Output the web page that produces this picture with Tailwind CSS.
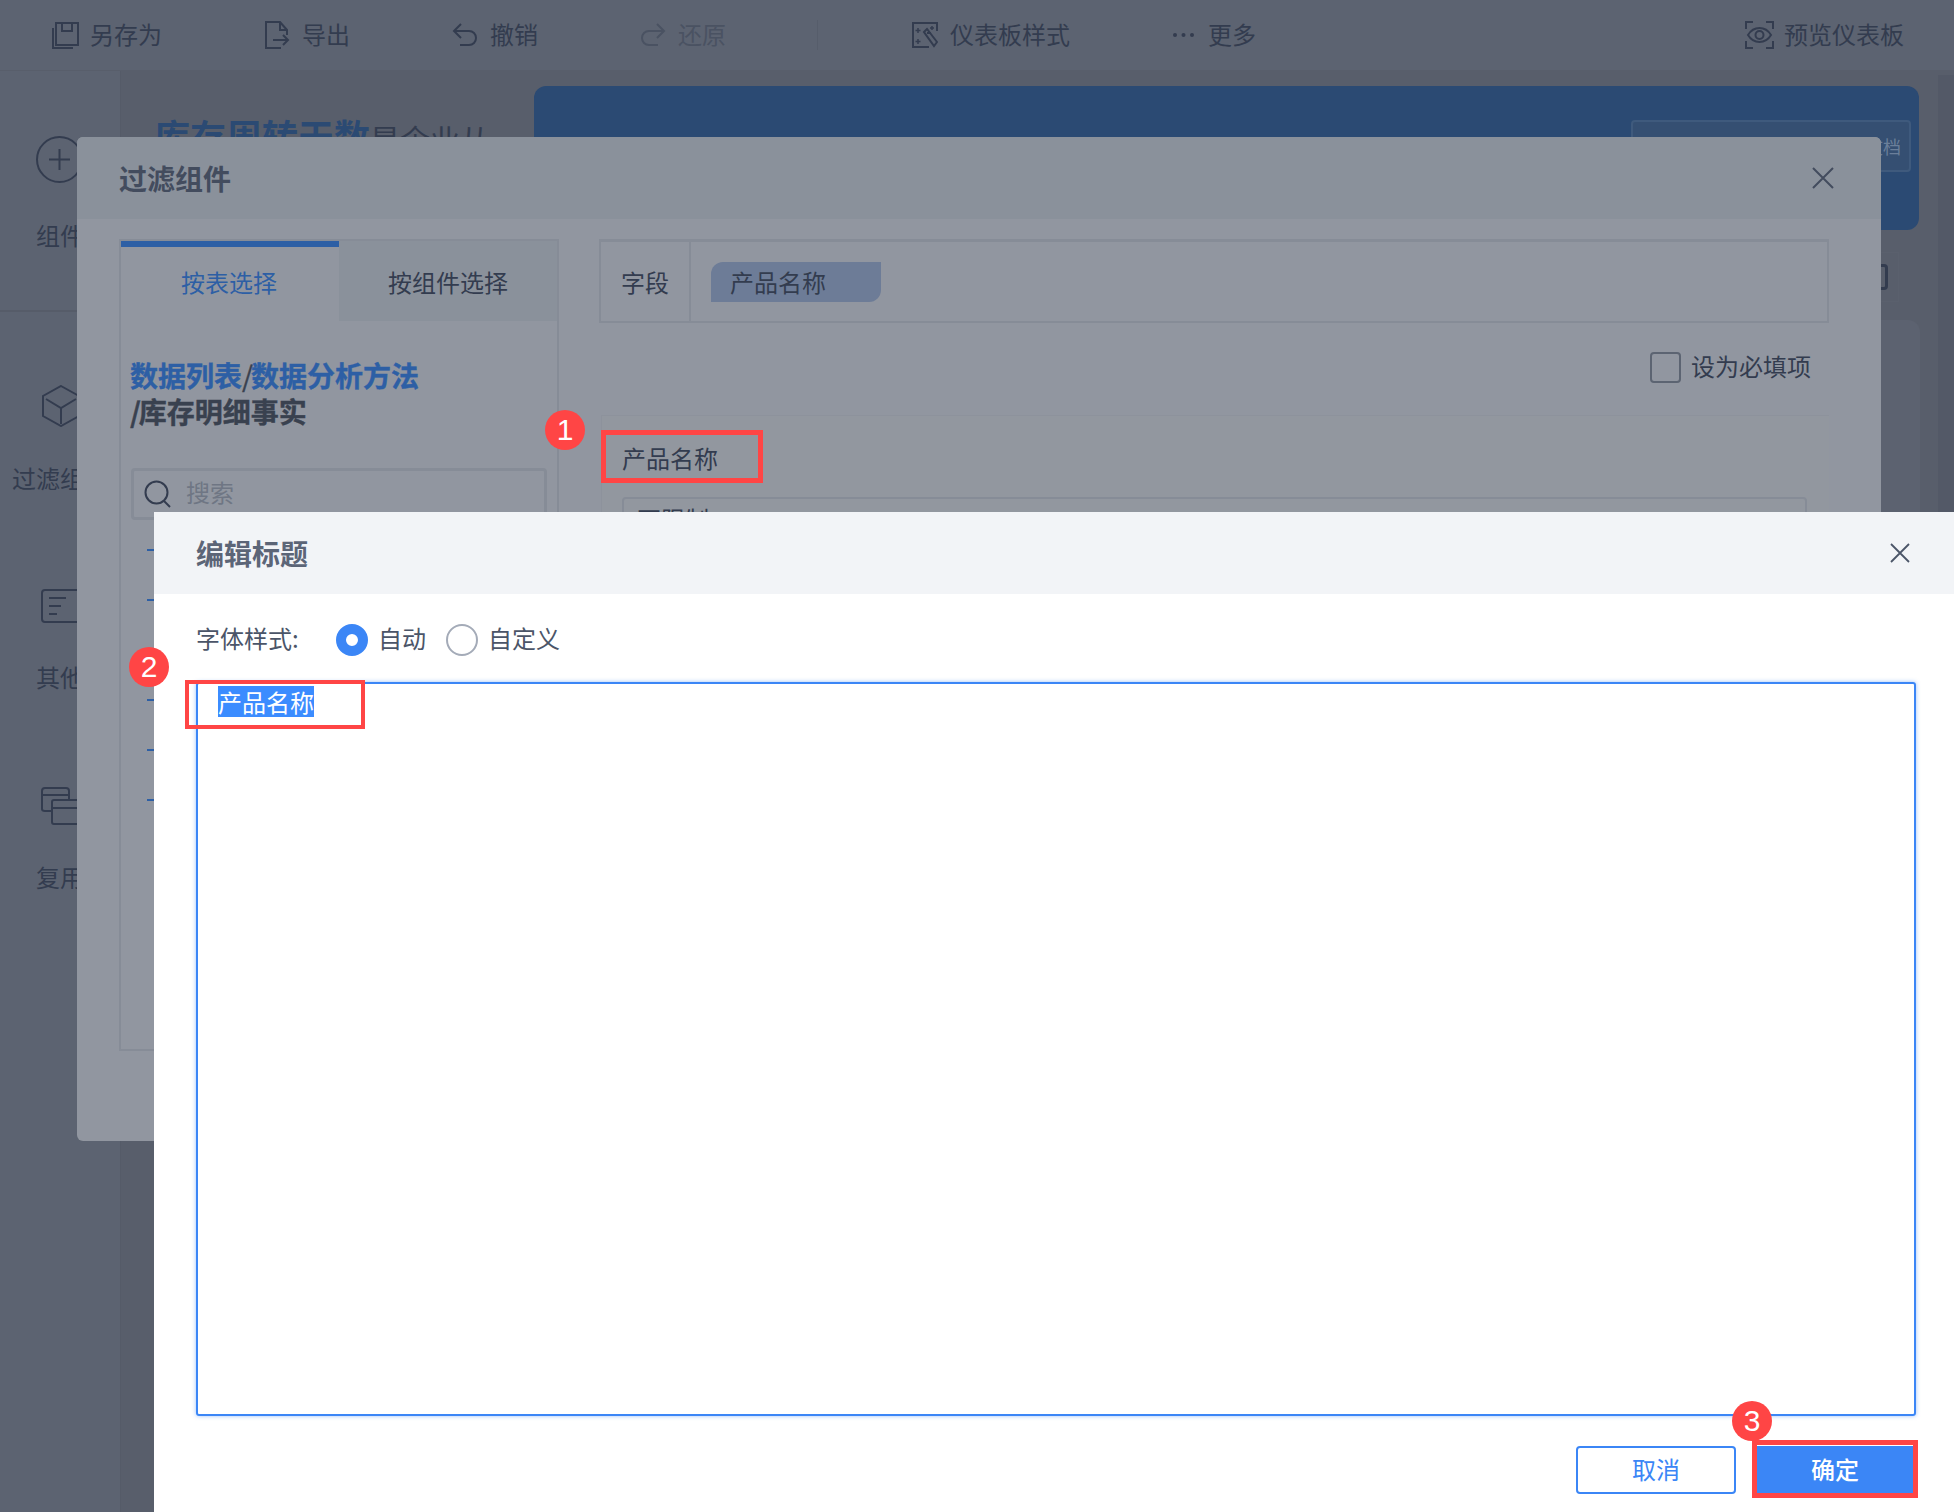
<!DOCTYPE html>
<html lang="zh-CN">
<head>
    <meta charset="UTF-8">
    <meta name="viewport" content="width=device-width, initial-scale=1.0">
    <title>编辑标题</title>
    <script src="https://cdn.jsdelivr.net/npm/@tailwindcss/browser@4"></script>
</head>
<body class="relative w-[1954px] h-[1512px] overflow-hidden bg-[#585e6b] text-[24px] leading-[32px] text-[#333c4f] font-['Noto_Sans_CJK_SC','Noto_Sans',sans-serif]">

    <!-- toolbar -->
    <header class="relative flex items-center h-[71px] bg-[#5c6371] border-b border-[#585e6b]">
        <div class="flex items-center gap-[11px] ml-[51px] w-[214px]">
            <svg class="w-[28px] h-[28px]" viewBox="0 0 28 28" fill="none" stroke="currentColor" stroke-width="2"><path d="M5 2h22v22H5zM2 7v20h20M11 2v8h10V2"/></svg>
            <span class="pb-[2px]">另存为</span>
        </div>
        <div class="flex items-center gap-[12px] w-[187px]">
            <svg class="w-[25px] h-[28px]" viewBox="0 0 25 28" fill="none" stroke="currentColor" stroke-width="2"><path d="M16 27H1V1h14l7 8v5M15 1v8h7M8 19h15M18 14l5 5-5 5"/></svg>
            <span class="pb-[2px]">导出</span>
        </div>
        <div class="flex items-center gap-[12px] w-[188px]">
            <svg class="w-[26px] h-[24px]" viewBox="0 0 26 24" fill="none" stroke="currentColor" stroke-width="2"><path d="M9 1L2 8l7 7M2 8h15c4 0 7 3 7 7s-3 7-7 7H8"/></svg>
            <span class="pb-[2px]">撤销</span>
        </div>
        <div class="flex items-center gap-[12px] w-[177px] text-[#4a5262]">
            <svg class="w-[26px] h-[24px]" viewBox="0 0 26 24" fill="none" stroke="currentColor" stroke-width="2"><path d="M17 1l7 7-7 7M24 8H9c-4 0-7 3-7 7s3 7 7 7h9"/></svg>
            <span class="pb-[2px]">还原</span>
        </div>
        <div class="w-px h-[30px] bg-[#565d6b] mr-[94px]"></div>
        <div class="flex items-center gap-[12px] w-[260px]">
            <svg class="w-[26px] h-[26px]" viewBox="0 0 26 26" fill="none" stroke="currentColor" stroke-width="2"><path d="M25 9V1H1v24h16"/><path d="M12 10l3-3 10 13-3 4zM15 11l4 0" /><path d="M6 6v5M3.500 8.500h5M20 4v4M18 6h4M6 17v5M3.500 19.500h5" stroke-width="1.500"/></svg>
            <span class="pb-[2px]">仪表板样式</span>
        </div>
        <div class="flex items-center gap-[13px] w-[573px]">
            <svg class="w-[23px] h-[6px]" viewBox="0 0 23 6" fill="currentColor"><circle cx="3" cy="3" r="2"/><circle cx="11.500" cy="3" r="2"/><circle cx="20" cy="3" r="2"/></svg>
            <span class="pb-[2px]">更多</span>
        </div>
        <div class="flex items-center gap-[10px]">
            <svg class="w-[29px] h-[28px]" viewBox="0 0 29 28" fill="none" stroke="currentColor" stroke-width="2"><path d="M8 1H1v7M21 1h7v7M8 27H1v-7M21 27h7v-7"/><path d="M3 14c3-5 7-7 11.500-7S23 9 26 14c-3 5-7 7-11.500 7S6 19 3 14z"/><circle cx="14.500" cy="14" r="4"/></svg>
            <span class="pb-[2px]">预览仪表板</span>
        </div>
    </header>

    <div class="flex h-[1441px]">
        <!-- left rail -->
        <aside class="w-[121px] shrink-0 bg-[#5c6371] border-r border-[#555b68]">
            <div class="h-[241px] border-b-2 border-[#565c69] pt-[65px] pl-[36px]">
                <svg class="w-[47px] h-[47px]" viewBox="0 0 47 47" fill="none" stroke="currentColor" stroke-width="2"><circle cx="23.500" cy="23.500" r="22.500"/><path d="M23.500 13v21M13 23.500h21"/></svg>
                <p class="mt-[36px]">组件</p>
            </div>
            <div class="pt-[73px] pl-[12px]">
                <svg class="ml-[29px] w-[40px] h-[42px]" viewBox="0 0 40 42" fill="none" stroke="currentColor" stroke-width="2"><path d="M20 1l18 10v20L20 41 2 31V11zM5 14l15 9 15-9M20 23v16"/></svg>
                <p class="mt-[35px] whitespace-nowrap">过滤组件</p>
            </div>
            <div class="pt-[95px] pl-[41px]">
                <svg class="w-[40px] h-[34px]" viewBox="0 0 40 34" fill="none" stroke="currentColor" stroke-width="2"><rect x="1" y="1" width="38" height="32" rx="3"/><path d="M8 9h17M8 17h12M8 25h8"/></svg>
                <p class="mt-[38px] -ml-[5px]">其他</p>
            </div>
            <div class="pt-[94px] pl-[41px]">
                <svg class="w-[40px] h-[38px]" viewBox="0 0 40 38" fill="none" stroke="currentColor" stroke-width="2"><path d="M28 13V4c0-2-1-3-3-3H4C2 1 1 2 1 4v18c0 1 1 2 3 2h6M1 8h27"/><path d="M11 15c0-2 1-2 2-2h25v24H13c-1 0-2-1-2-2zM11 21h27"/></svg>
                <p class="mt-[36px] -ml-[5px]">复用</p>
            </div>
        </aside>

        <!-- canvas behind the dialogs -->
        <main class="relative flex-1 min-w-0 pl-[33px] pt-[15px]">
            <div class="flex gap-[46px] items-start">
                <p class="pt-[27px] w-[334px] whitespace-nowrap leading-[44px] text-[30px]"><span class="text-[36px] font-bold text-[#2b4a73]">库存周转天数</span>是企业从</p>
                <div class="w-[1385px] h-[144px] shrink-0 rounded-[12px] bg-[#2b4a73] pt-[34px] pr-[8px] flex justify-end">
                    <div class="w-[280px] h-[52px] rounded bg-[#354f72] border-2 border-[#3f5a7d] flex items-center justify-end pr-[8px] text-[#6b7f9a] text-[18px]">文档</div>
                </div>
            </div>
            <div class="absolute right-[55px] top-[181px] w-[60px] h-[50px] border border-[#5a606d] flex items-center justify-end pr-[10px]">
                <div class="w-[24px] h-[26px] border-[3px] border-[#333c4f] rounded-sm"></div>
            </div>
            <div class="absolute right-[34px] top-[249px] w-[100px] h-[900px] rounded-[12px] bg-[#5c6270]"></div>
            <div class="absolute right-0 top-[4px] w-[16px] h-[1437px] bg-[#535967]"></div>
        </main>
    </div>

    <!-- filter dialog -->
    <section class="absolute left-[77px] top-[137px] w-[1804px] h-[1004px] rounded-[6px] overflow-hidden bg-[#9196a0]">
        <div class="flex items-center justify-between h-[82px] bg-[#8a919b] pl-[42px] pr-[47px] ">
            <h2 class="text-[28px] font-bold text-[#434c5e]">过滤组件</h2>
            <svg class="w-[22px] h-[22px] text-[#434c5e]" viewBox="0 0 22 22" fill="none" stroke="currentColor" stroke-width="2"><path d="M1 1l20 20M21 1L1 21"/></svg>
        </div>
        <div class="flex pl-[42px] pt-[20px]">
            <div class="w-[440px] h-[812px] shrink-0 border-2 border-[#868c97]">
                <div class="flex h-[80px]">
                    <div class="w-[218px] border-t-[6px] border-[#2d5fa5] text-center pt-[19px] pr-[2px] text-[#2d5fa5]">按表选择</div>
                    <div class="flex-1 bg-[#8a919b] text-center pt-[25px]">按组件选择</div>
                </div>
                <div class="pl-[9px] pt-[36px] text-[28px] leading-[36px] font-bold text-[#39414f] [-webkit-text-stroke:0.4px_currentColor]">
                    <p class="text-[#2d5fa5]">数据列表<span class="text-[#39414f] font-normal tracking-[-2px]">/</span>数据分析方法</p>
                    <p><span class="tracking-[-2px]">/</span>库存明细事实</p>
                </div>
                <div class="flex items-center gap-[14px] ml-[10px] mt-[39px] w-[416px] h-[52px] pl-[10px] border-[3px] rounded border-[#868c97] text-[#6f7684]">
                    <svg class="w-[28px] h-[28px] text-[#333c4f]" viewBox="0 0 28 28" fill="none" stroke="currentColor" stroke-width="2"><circle cx="12.500" cy="12.500" r="11"/><path d="M20 21l6 6"/></svg>
                    <span class="pb-[5px]">搜索</span>
                </div>
            </div>
            <div class="ml-[40px] w-[1230px]">
                <div class="flex h-[84px] border-2 border-t-[3px] border-[#868c97]">
                    <div class="w-[90px] border-r-2 border-[#868c97] flex items-center justify-center">字段</div>
                    <div class="flex items-center ml-[20px]">
                        <div class="w-[170px] h-[40px] pl-[19px] leading-[40px] bg-[#6d7c97] rounded-tl-[12px] rounded-br-[12px]">产品名称</div>
                    </div>
                </div>
                <div class="flex justify-end items-center gap-[10px] pr-[18px] pt-[27px]">
                    <div class="w-[31px] h-[31px] rounded border-2 border-[#5c6472]"></div>
                    <span class="pb-[2px]">设为必填项</span>
                </div>
                <div class="mt-[31px] ml-[2px] h-[400px] bg-[#92979f] border-t border-l border-[#8d929c] pl-[20px] pr-[22px]">
                    <p class="pt-[26px]">产品名称</p>
                    <div class="mt-[23px] h-[60px] border-2 rounded border-[#868c97] pl-[13px] pt-[4px]">不限制</div>
                </div>
            </div>
        </div>
    </section>
    <!-- dashes of the tree list, they peek out beside the second dialog -->
    <div class="absolute left-[147px] top-[549px] flex flex-col">
        <i class="w-[7px] h-[2px] bg-[#2d5fa5]"></i>
        <i class="w-[7px] h-[2px] bg-[#2d5fa5] mt-[48px]"></i>
        <i class="w-[7px] h-[2px] bg-[#2d5fa5] mt-[98px]"></i>
        <i class="w-[7px] h-[2px] bg-[#2d5fa5] mt-[48px]"></i>
        <i class="w-[7px] h-[2px] bg-[#2d5fa5] mt-[48px]"></i>
    </div>

    <!-- edit title dialog -->
    <section class="absolute left-[154px] top-[512px] w-[1800px] h-[1000px] rounded-tl-[4px] bg-white text-[#4b5568]">
        <div class="flex items-center justify-between h-[82px] bg-[#f2f4f7] pl-[42px] pr-[44px]">
            <h2 class="text-[28px] font-bold text-[#5c6577]">编辑标题</h2>
            <svg class="w-[20px] h-[20px] text-[#4b5568]" viewBox="0 0 20 20" fill="none" stroke="currentColor" stroke-width="1.800"><path d="M1 1l18 18M19 1L1 19"/></svg>
        </div>
        <div class="flex items-center h-[56px] pl-[42px] mt-[18px]">
            <span class="w-[140px] pb-[5px]">字体样式:</span>
            <span class="w-[32px] h-[32px] rounded-full border-[10px] border-[#3b86f6] bg-white"></span>
            <span class="ml-[10px] w-[68px] pb-[5px]">自动</span>
            <span class="w-[32px] h-[32px] rounded-full border-2 border-[#a4abb8]"></span>
            <span class="ml-[10px] pb-[5px]">自定义</span>
        </div>
        <div class="ml-[42px] mt-[14px] w-[1720px] h-[734px] rounded-[3px] border-2 border-[#3b86f6] shadow-[0_0_4px_#3b86f680] pl-[20px] pt-[2px] text-white">
            <span class="inline-block h-[31px] leading-[31px] bg-[#3b8cff]">产品名称</span>
        </div>
        <div class="flex justify-end gap-[21px] pr-[41px] mt-[30px]">
            <button class="w-[160px] h-[48px] rounded border-2 border-[#3b86f6] text-[#3b86f6] pb-[2px]">取消</button>
            <button class="w-[156px] h-[48px] bg-[#3b86f6] text-white font-medium pb-[2px]">确定</button>
        </div>
    </section>

    <!-- red annotations -->
    <div class="absolute left-[601px] top-[430px] w-[162px] h-[53px] border-[5px] border-[#ff4545]"></div>
    <div class="absolute left-[185px] top-[680px] w-[180px] h-[49px] border-[4px] border-[#ff4545]"></div>
    <div class="absolute left-[1752px] top-[1440px] w-[166px] h-[58px] border-[5px] border-[#ff4545]"></div>
    <div class="absolute left-[545px] top-[410px] w-[40px] h-[40px] rounded-full bg-[#ff4545] text-white text-[30px] leading-[40px] text-center font-['Liberation_Sans',sans-serif]">1</div>
    <div class="absolute left-[129px] top-[647px] w-[40px] h-[40px] rounded-full bg-[#ff4545] text-white text-[30px] leading-[40px] text-center font-['Liberation_Sans',sans-serif]">2</div>
    <div class="absolute left-[1732px] top-[1401px] w-[40px] h-[40px] rounded-full bg-[#ff4545] text-white text-[30px] leading-[40px] text-center font-['Liberation_Sans',sans-serif]">3</div>

</body>
</html>
